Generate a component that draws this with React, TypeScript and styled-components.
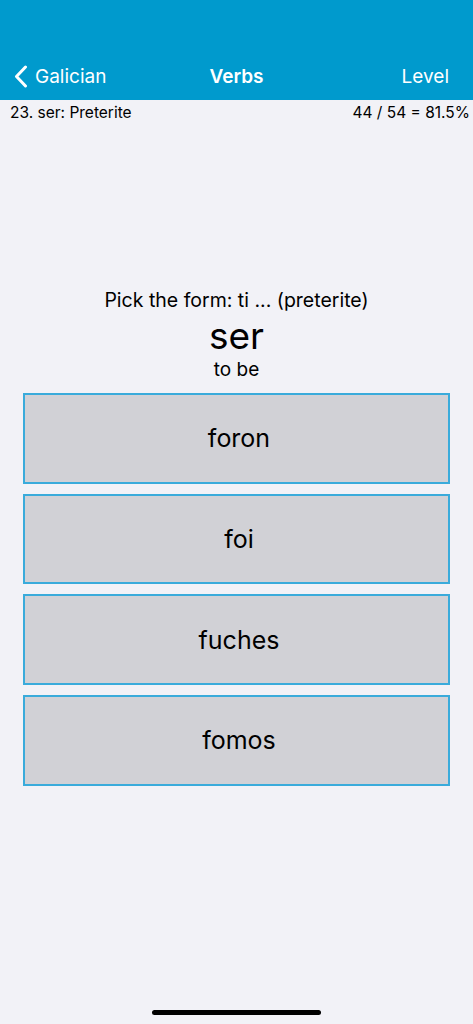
import React from 'react';
import styled, { createGlobalStyle } from 'styled-components';

const GlobalStyle = createGlobalStyle`
  html, body {
    margin: 0;
    padding: 0;
    background-color: #f2f2f7;
  }
  body {
    font-family: Inter, "Noto Sans", "Liberation Sans", sans-serif;
    color: #000000;
  }
`;

const Page = styled.div`
  display: flex;
  flex-direction: column;
  width: 100%;
  height: 1024px;
  background-color: #f2f2f7;
  overflow: hidden;
`;

const Header = styled.div`
  flex: 0 0 100px;
  background-color: #009acd;
  display: flex;
  flex-direction: column;
  justify-content: flex-end;
`;

const NavBar = styled.div`
  height: 48px;
  display: grid;
  grid-template-columns: 1fr auto 1fr;
  align-items: center;
  padding: 0 14px 0 14px;
  color: #ffffff;
  font-size: 19px;
`;

const BackButton = styled.div`
  display: flex;
  align-items: center;
  gap: 7px;
`;

const Title = styled.div`
  font-weight: 600;
  text-align: center;
`;

const RightAction = styled.div`
  text-align: right;
  padding-right: 10px;
`;

const StatusRow = styled.div`
  display: flex;
  justify-content: space-between;
  align-items: center;
  padding: 4px 3px 0 10px;
  font-size: 15.5px;
  line-height: 18px;
`;

const Quiz = styled.div`
  display: flex;
  flex-direction: column;
  align-items: center;
  margin-top: 166px;
`;

const Prompt = styled.div`
  font-size: 19.5px;
  line-height: 24px;
`;

const Word = styled.div`
  font-size: 37px;
  line-height: 44px;
  margin-top: 2px;
`;

const Meaning = styled.div`
  font-size: 19px;
  line-height: 24px;
  margin-top: 0;
`;

const Choices = styled.div`
  display: flex;
  flex-direction: column;
  gap: 10px;
  width: 100%;
  box-sizing: border-box;
  padding: 0 23px;
  margin-top: 11px;
`;

const Choice = styled.div`
  height: 90.7px;
  box-sizing: border-box;
  border: 2px solid #3aabdb;
  background-color: #d1d1d6;
  display: flex;
  justify-content: center;
  align-items: center;
  padding-left: 5px;
  font-size: 25px;
`;

const Spacer = styled.div`
  flex: 1;
`;

const HomeIndicator = styled.div`
  align-self: center;
  width: 169px;
  height: 5px;
  border-radius: 3px;
  background-color: #000000;
  margin-bottom: 9px;
`;

const options = ['foron', 'foi', 'fuches', 'fomos'];

export default function App() {
  return (
    <Page>
      <GlobalStyle />
      <Header>
        <NavBar>
          <BackButton>
            <svg width="14" height="23" viewBox="0 0 14 23">
              <path d="M11.5 2 L2.5 11.5 L11.5 21" fill="none" stroke="#ffffff" strokeWidth="3" strokeLinecap="round" strokeLinejoin="round" />
            </svg>
            <span>Galician</span>
          </BackButton>
          <Title>Verbs</Title>
          <RightAction>Level</RightAction>
        </NavBar>
      </Header>
      <StatusRow>
        <span>23. ser: Preterite</span>
        <span>44 / 54 = 81.5%</span>
      </StatusRow>
      <Quiz>
        <Prompt>Pick the form: ti ... (preterite)</Prompt>
        <Word>ser</Word>
        <Meaning>to be</Meaning>
      </Quiz>
      <Choices>
        {options.map((o) => (
          <Choice key={o}>{o}</Choice>
        ))}
      </Choices>
      <Spacer />
      <HomeIndicator />
    </Page>
  );
}
